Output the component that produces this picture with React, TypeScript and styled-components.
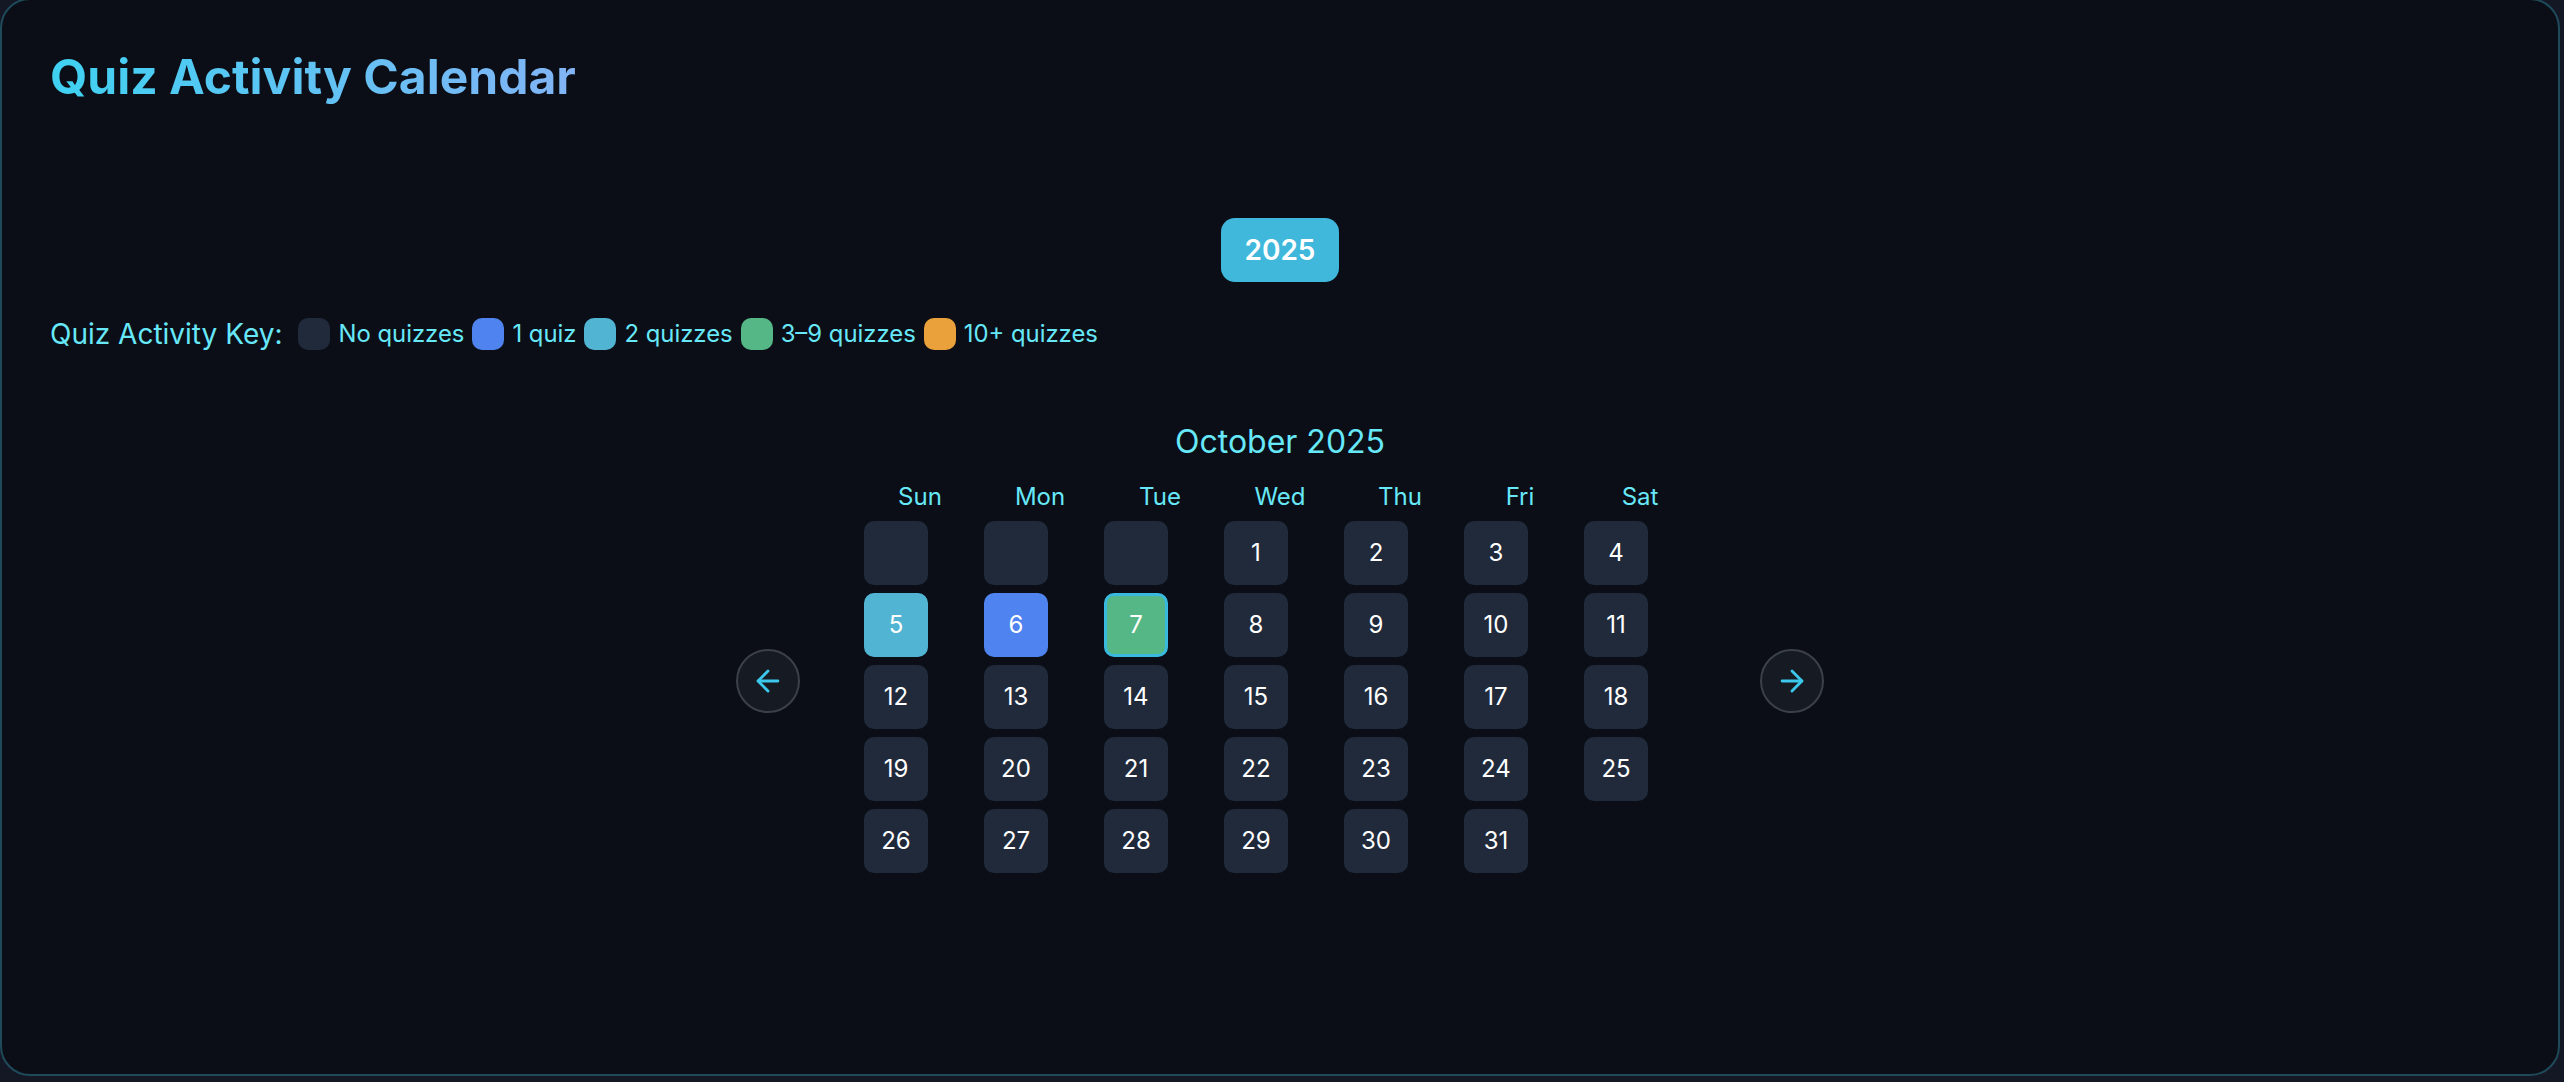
import styled, { createGlobalStyle } from 'styled-components';
import { ArrowLeft, ArrowRight } from 'lucide-react';

const GlobalStyle = createGlobalStyle`
  html, body {
    margin: 0;
    padding: 0;
    background: #131824;
    font-family: Inter, "Noto Sans", sans-serif;
  }
  * {
    box-sizing: border-box;
  }
`;

const Card = styled.section`
  width: 2560px;
  height: 1078px;
  margin-top: -2px;
  background: #0b0e16;
  border: 2px solid #1f4a5a;
  border-radius: 30px;
  padding: 48px 48px;
  overflow: hidden;
`;

const Title = styled.h1`
  margin: 0;
  font-size: 48px;
  line-height: 1.2;
  font-weight: 700;
  background: linear-gradient(90deg, #3fd1f1 0%, #82b4f6 100%);
  -webkit-background-clip: text;
  background-clip: text;
  color: transparent;
  display: inline-block;
`;

const YearRow = styled.div`
  display: flex;
  justify-content: center;
  margin-top: 112px;
`;

const YearButton = styled.button`
  height: 64px;
  padding: 0 24px;
  border: none;
  border-radius: 14px;
  background: #3fb8dc;
  color: #ffffff;
  font-family: Inter, sans-serif;
  font-size: 28px;
  font-weight: 600;
  cursor: pointer;
`;

const Legend = styled.div`
  display: flex;
  align-items: center;
  gap: 8px;
  height: 32px;
  margin-top: 36px;
  color: #67e8f9;
`;

const LegendLabel = styled.span`
  font-size: 28px;
  line-height: 32px;
  margin-right: 8px;
`;

const LegendItem = styled.span`
  display: flex;
  align-items: center;
  gap: 8px;
  font-size: 23.85px;
  line-height: 32px;
`;

const Swatch = styled.span<{ $color: string }>`
  width: 32px;
  height: 32px;
  border-radius: 10px;
  background: ${(p) => p.$color};
`;

const MonthSection = styled.div`
  display: flex;
  flex-direction: column;
  align-items: center;
  margin-top: 73px;
`;

const MonthTitle = styled.h2`
  margin: 0 0 24px;
  font-size: 32px;
  line-height: 1.2;
  font-weight: 400;
  color: #67e8f9;
`;

const CalendarRow = styled.div`
  display: flex;
  align-items: center;
  gap: 64px;
`;

const NavButton = styled.button`
  width: 64px;
  height: 64px;
  margin-top: 4px;
  border-radius: 50%;
  border: 2px solid #3b4049;
  background: #161a23;
  color: #3cc8ec;
  display: flex;
  align-items: center;
  justify-content: center;
  padding: 0;
  cursor: pointer;
`;

const CalendarBody = styled.div`
  display: flex;
  flex-direction: column;
  gap: 12px;
`;

const Grid = styled.div`
  display: grid;
  grid-template-columns: repeat(7, 112px);
  column-gap: 8px;
  row-gap: 8px;
`;

const Weekday = styled.div`
  text-align: center;
  font-size: 24px;
  line-height: 24px;
  font-weight: 400;
  color: #67e8f9;
`;

const DayCell = styled.div<{ $color: string; $today?: boolean }>`
  width: 64px;
  height: 64px;
  border-radius: 10px;
  background: ${(p) => p.$color};
  border: ${(p) => (p.$today ? '3px solid #3ab9df' : 'none')};
  display: flex;
  align-items: center;
  justify-content: center;
  color: #ffffff;
  font-size: 24px;
  font-weight: 400;
`;

const EmptySlot = styled.div`
  width: 64px;
  height: 64px;
`;

const COLORS = {
  none: '#202a3b',
  one: '#4f83ef',
  two: '#52b4d3',
  few: '#55b686',
  many: '#eaa13b',
};

const legend = [
  { label: 'No quizzes', color: COLORS.none },
  { label: '1 quiz', color: COLORS.one },
  { label: '2 quizzes', color: COLORS.two },
  { label: '3–9 quizzes', color: COLORS.few },
  { label: '10+ quizzes', color: COLORS.many },
];

const weekdays = ['Sun', 'Mon', 'Tue', 'Wed', 'Thu', 'Fri', 'Sat'];

const activity: Record<number, string> = {
  5: COLORS.two,
  6: COLORS.one,
  7: COLORS.few,
};

const TODAY = 7;
const FIRST_WEEKDAY = 3;
const DAYS = 31;

const App = () => {
  const slots: (number | null)[] = [];
  for (let i = 0; i < FIRST_WEEKDAY; i++) slots.push(null);
  for (let d = 1; d <= DAYS; d++) slots.push(d);

  return (
    <>
      <GlobalStyle />
      <Card>
        <Title>Quiz Activity Calendar</Title>
        <YearRow>
          <YearButton>2025</YearButton>
        </YearRow>
        <Legend>
          <LegendLabel>Quiz Activity Key:</LegendLabel>
          {legend.map((item) => (
            <LegendItem key={item.label}>
              <Swatch $color={item.color} />
              {item.label}
            </LegendItem>
          ))}
        </Legend>
        <MonthSection>
          <MonthTitle>October 2025</MonthTitle>
          <CalendarRow>
            <NavButton aria-label="Previous month">
              <ArrowLeft size={34} strokeWidth={2} />
            </NavButton>
            <CalendarBody>
              <Grid>
                {weekdays.map((w) => (
                  <Weekday key={w}>{w}</Weekday>
                ))}
              </Grid>
              <Grid>
                {slots.map((d, i) =>
                  d === null ? (
                    <DayCell key={`e${i}`} $color={COLORS.none} />
                  ) : (
                    <DayCell key={d} $color={activity[d] ?? COLORS.none} $today={d === TODAY}>
                      {d}
                    </DayCell>
                  ),
                )}
                <EmptySlot />
              </Grid>
            </CalendarBody>
            <NavButton aria-label="Next month">
              <ArrowRight size={34} strokeWidth={2} />
            </NavButton>
          </CalendarRow>
        </MonthSection>
      </Card>
    </>
  );
};

export default App;
